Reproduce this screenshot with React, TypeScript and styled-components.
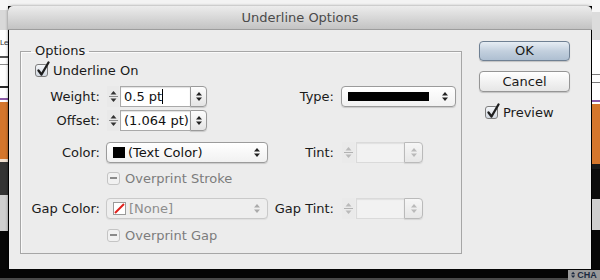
import styled, { createGlobalStyle } from 'styled-components';

const GlobalStyle = createGlobalStyle`
  html, body {
    margin: 0;
    padding: 0;
    background: #000;
  }
  body {
    font-family: "DejaVu Sans", "Liberation Sans", sans-serif;
    -webkit-font-smoothing: antialiased;
  }
`

const Screen = styled.div`
  width: 600px;
  height: 280px;
  overflow: hidden;
  display: grid;
  grid-template-columns: 8px 584px 8px;
  grid-template-rows: 6px 263px 11px;
  background: #000;
`

const Strip = styled.div<{ $col: number }>`
  grid-column: ${p => p.$col};
  grid-row: 1 / 3;
  display: flex;
  flex-direction: column;
  overflow: hidden;
`

const Band = styled.div<{ $h: number; $bg: string }>`
  flex: 0 0 ${p => p.$h}px;
  background: ${p => p.$bg};
  color: #333;
  font-family: "Liberation Sans", sans-serif;
  font-size: 8px;
  letter-spacing: -0.5px;
  line-height: ${p => p.$h}px;
  white-space: nowrap;
  overflow: hidden;
`

const TopGap = styled.div`
  grid-column: 2;
  grid-row: 1;
  background: #f3f3f3;
`

const BottomStrip = styled.div`
  grid-column: 1 / 4;
  grid-row: 3;
  display: flex;
  justify-content: flex-end;
  align-items: flex-start;
  background: #050505;
  border-bottom: 2px solid #4a4a4a;
`

const PanelTag = styled.div`
  width: 32px;
  height: 10px;
  margin-top: 1px;
  background: #9a9a9a;
  color: #1c2a40;
  font-family: "Liberation Sans", sans-serif;
  font-weight: bold;
  font-size: 9px;
  line-height: 10px;
  display: flex;
  align-items: center;
  gap: 2px;
  padding-left: 3px;
  box-sizing: border-box;
`

const Dialog = styled.div`
  grid-column: 2;
  grid-row: 2;
  display: flex;
  flex-direction: column;
  box-shadow: 0 0 3px rgba(0, 0, 0, 0.45);
  border-radius: 5px 5px 0 0;
`

const TitleBar = styled.div`
  height: 24px;
  border-radius: 5px 5px 0 0;
  background: linear-gradient(#ececec, #d8d8d8 50%, #c3c3c3);
  border-bottom: 1px solid #9d9d9d;
  box-sizing: border-box;
  text-align: center;
  font-size: 13px;
  line-height: 24px;
  color: #4a4a4a;
`

const Body = styled.div`
  flex: 1;
  margin: 0 1px;
  background: #ececec;
  display: flex;
  align-items: flex-start;
  padding-left: 11px;
`

const Group = styled.fieldset`
  margin: 13px 0 0 0;
  padding: 0;
  width: 442px;
  height: 211px;
  box-sizing: border-box;
  border: 1px solid #a6a6a6;
  box-shadow: inset 1px 1px 0 #fafafa;
  display: flex;
  flex-direction: column;
`

const Legend = styled.legend`
  margin-left: 10px;
  padding: 0 4px;
  font-size: 13px;
  line-height: 16px;
  color: #1a1a1a;
`

const Row = styled.div<{ $top: number; $h: number }>`
  margin-top: ${p => p.$top}px;
  height: ${p => p.$h}px;
  display: grid;
  grid-template-columns: 85px 162px 73px 1fr;
  align-items: center;
  font-size: 13px;
  color: #1a1a1a;
`

const Label = styled.span<{ $pad?: number }>`
  text-align: right;
  padding-right: ${p => p.$pad ?? 6}px;
  white-space: nowrap;
`

const CheckRow = styled.label<{ $indent: number; $span?: string; $muted?: boolean }>`
  grid-column: ${p => p.$span ?? 'auto'};
  padding-left: ${p => p.$indent}px;
  display: flex;
  align-items: center;
  gap: 5px;
  font-size: 13px;
  color: ${p => (p.$muted ? '#7c7c7c' : '#1a1a1a')};
  white-space: nowrap;
`

const Box = styled.span<{ $disabled?: boolean }>`
  position: relative;
  width: 13px;
  height: 13px;
  box-sizing: border-box;
  border-radius: 3px;
  border: 1px solid ${p => (p.$disabled ? '#c4c4c4' : '#7d7d7d')};
  background: ${p =>
    p.$disabled ? '#f1f1f1' : 'linear-gradient(#f4f6f9, #d3d9e1)'};
  display: flex;
  align-items: center;
  justify-content: center;
  flex-shrink: 0;
`

const Dash = styled.span`
  width: 7px;
  height: 2px;
  background: #8a8a8a;
`

const Tick = styled.svg`
  position: absolute;
  left: 0px;
  top: -4px;
`

const Spin = styled.div<{ $disabled?: boolean }>`
  display: flex;
  height: 21px;
  margin-left: 1px;
  opacity: ${p => (p.$disabled ? 0.6 : 1)};
`

const Stepper = styled.div<{ $w: number }>`
  width: ${p => p.$w}px;
  margin-right: 1px;
  background: #e9e9e9;
  display: flex;
  align-items: center;
  justify-content: center;
`

const Field = styled.div<{ $w: number; $disabled?: boolean }>`
  width: ${p => p.$w}px;
  box-sizing: border-box;
  background: ${p => (p.$disabled ? '#f6f6f6' : '#fff')};
  border: 1px solid ${p => (p.$disabled ? '#cfcfcf' : '#a9a9a9')};
  border-right: none;
  box-shadow: inset 0 1px 1px rgba(0, 0, 0, 0.12);
  padding-left: 3px;
  font-size: 13px;
  line-height: 19px;
  color: #111;
  white-space: nowrap;
  overflow: hidden;
`

const Caret = styled.span`
  display: inline-block;
  width: 1px;
  height: 15px;
  background: #000;
  vertical-align: -3px;
`

const SpinButton = styled.div<{ $w: number }>`
  width: ${p => p.$w}px;
  box-sizing: border-box;
  border: 1px solid #9a9a9a;
  border-radius: 0 4px 4px 0;
  background: linear-gradient(#fdfdfd, #e4e4e4);
  box-shadow: 0 1px 1px rgba(0, 0, 0, 0.15);
  display: flex;
  align-items: center;
  justify-content: center;
`

const Popup = styled.div<{ $w: number; $disabled?: boolean }>`
  width: ${p => p.$w}px;
  height: 21px;
  box-sizing: border-box;
  border: 1px solid ${p => (p.$disabled ? '#c9c9c9' : '#9b9b9b')};
  border-radius: 4px;
  background: ${p =>
    p.$disabled ? '#eeeeee' : 'linear-gradient(#ffffff, #f1f1f1)'};
  box-shadow: 0 1px 1px rgba(0, 0, 0, ${p => (p.$disabled ? 0.06 : 0.15)});
  display: flex;
  align-items: center;
  padding: 0 7px 0 6px;
  gap: 3px;
  font-size: 13px;
  color: ${p => (p.$disabled ? '#8d8d8d' : '#111')};
  white-space: nowrap;
`

const PopupText = styled.span`
  flex: 1;
`

const Swatch = styled.span`
  width: 12px;
  height: 11px;
  background: #000;
  flex-shrink: 0;
`

const LineSample = styled.span`
  flex: 1;
  height: 9px;
  background: #000;
  margin-right: 10px;
`

const Side = styled.div`
  margin-left: 17px;
  padding-top: 11px;
  display: flex;
  flex-direction: column;
`

const Button = styled.div<{ $primary?: boolean }>`
  width: 91px;
  height: ${p => (p.$primary ? 20 : 21)}px;
  margin-bottom: ${p => (p.$primary ? 10 : 13)}px;
  box-sizing: border-box;
  border-radius: 4px;
  border: 1px solid ${p => (p.$primary ? '#6f8093' : '#959595')};
  background: ${p =>
    p.$primary
      ? 'linear-gradient(#e6edf4, #c3d0de 50%, #aebfd1)'
      : 'linear-gradient(#ffffff, #f2f2f2 50%, #e6e6e6)'};
  box-shadow: 0 1px 1px rgba(0, 0, 0, 0.18);
  text-align: center;
  font-size: 13px;
  line-height: ${p => (p.$primary ? 18 : 19)}px;
  color: #1a1a1a;
`

function Arrows({ size = 1, color = '#222' }: { size?: number; color?: string }) {
  return (
    <svg width={6 * size} height={11 * size} viewBox="0 0 6 11">
      <path d="M3 1 L6 4.5 L0 4.5 Z" fill={color} />
      <path d="M3 10 L6 6.5 L0 6.5 Z" fill={color} />
    </svg>
  )
}

function StepperArrows({ color = '#333' }: { color?: string }) {
  return (
    <svg width="9" height="15" viewBox="0 0 9 15">
      <path d="M4.5 2 L7.5 5.5 L1.5 5.5 Z" fill={color} />
      <rect x="0" y="7" width="9" height="1" fill="#8d8d8d" />
      <path d="M4.5 13 L7.5 9.5 L1.5 9.5 Z" fill={color} />
    </svg>
  )
}

function Check({ disabled }: { disabled?: boolean }) {
  return (
    <Box $disabled={disabled}>
      {disabled ? (
        <Dash />
      ) : (
        <Tick width="15" height="17" viewBox="0 0 15 17">
          <path
            d="M2.5 9.5 L5.5 13.5 L12.5 1.5"
            fill="none"
            stroke="#1e1e1e"
            strokeWidth="2.3"
            strokeLinecap="round"
            strokeLinejoin="round"
          />
        </Tick>
      )}
    </Box>
  )
}

function NoneSwatch() {
  return (
    <svg width="13" height="13" viewBox="0 0 13 13">
      <rect x="0.5" y="0.5" width="12" height="12" fill="#fff" stroke="#9a9a9a" />
      <path d="M2 11 L11 2" stroke="#e0201c" strokeWidth="2" />
    </svg>
  )
}

function SpinBox({
  value,
  caret,
  disabled,
}: {
  value?: string
  caret?: boolean
  disabled?: boolean
}) {
  return (
    <Spin $disabled={disabled}>
      <Stepper $w={disabled ? 13 : 12}>
        <StepperArrows color={disabled ? '#999' : '#333'} />
      </Stepper>
      <Field $w={disabled ? 48 : 70} $disabled={disabled}>
        {value}
        {caret && <Caret />}
      </Field>
      <SpinButton $w={disabled ? 19 : 17}>
        <Arrows color={disabled ? '#999' : '#222'} />
      </SpinButton>
    </Spin>
  )
}

const leftBands: [number, string, string?][] = [
  [10, '#f6f6f6'],
  [20, '#d9d9d9'],
  [26, '#ffffff', 'Le'],
  [2, '#555555'],
  [6, '#ffffff'],
  [1, '#8a8a8a'],
  [21, '#ffffff'],
  [2, '#2a2a2a'],
  [10, '#ffffff'],
  [2, '#8b5aa8'],
  [2, '#ffffff'],
  [57, '#d4762c'],
  [3, '#f0e0d0'],
  [33, '#333333'],
  [36, '#cfcfcf'],
  [38, '#070707'],
]

const rightBands: [number, string, string?][] = [
  [12, '#f6f6f6'],
  [28, '#dcdcdc'],
  [34, '#ffffff'],
  [1, '#7a7a7a'],
  [7, '#ffffff'],
  [1, '#7a7a7a'],
  [17, '#ffffff'],
  [2, '#8b5aa8'],
  [2, '#ffffff'],
  [60, '#d4762c'],
  [5, '#1a1a1a'],
  [30, '#0c0c0c'],
  [31, '#cfcfcf'],
  [39, '#070707'],
]

export default function App() {
  return (
    <>
      <GlobalStyle />
      <Screen>
        <Strip $col={1}>
          {leftBands.map(([h, bg, text], i) => (
            <Band key={i} $h={h} $bg={bg}>
              {text}
            </Band>
          ))}
        </Strip>
        <TopGap />
        <Dialog>
          <TitleBar>Underline Options</TitleBar>
          <Body>
            <Group>
              <Legend>Options</Legend>

              <Row $top={1} $h={20}>
                <CheckRow $indent={14} $span="1 / 5">
                  <Check />
                  Underline On
                </CheckRow>
              </Row>

              <Row $top={6} $h={21}>
                <Label>Weight:</Label>
                <SpinBox value="0.5 pt" caret />
                <Label $pad={7}>Type:</Label>
                <Popup $w={115}>
                  <LineSample />
                  <Arrows />
                </Popup>
              </Row>

              <Row $top={3} $h={21}>
                <Label>Offset:</Label>
                <SpinBox value="(1.064 pt)" />
              </Row>

              <Row $top={11} $h={21}>
                <Label>Color:</Label>
                <Popup $w={162}>
                  <Swatch />
                  <PopupText>(Text Color)</PopupText>
                  <Arrows />
                </Popup>
                <Label $pad={7}>Tint:</Label>
                <SpinBox disabled />
              </Row>

              <Row $top={5} $h={20}>
                <CheckRow $indent={1} $span="2 / 4" $muted>
                  <Check disabled />
                  Overprint Stroke
                </CheckRow>
              </Row>

              <Row $top={10} $h={21}>
                <Label>Gap Color:</Label>
                <Popup $w={162} $disabled>
                  <NoneSwatch />
                  <PopupText>[None]</PopupText>
                  <Arrows color="#aaa" />
                </Popup>
                <Label $pad={7}>Gap Tint:</Label>
                <SpinBox disabled />
              </Row>

              <Row $top={6} $h={20}>
                <CheckRow $indent={1} $span="2 / 4" $muted>
                  <Check disabled />
                  Overprint Gap
                </CheckRow>
              </Row>
            </Group>

            <Side>
              <Button $primary>OK</Button>
              <Button>Cancel</Button>
              <CheckRow $indent={6}>
                <Check />
                Preview
              </CheckRow>
            </Side>
          </Body>
        </Dialog>
        <Strip $col={3}>
          {rightBands.map(([h, bg, text], i) => (
            <Band key={i} $h={h} $bg={bg}>
              {text}
            </Band>
          ))}
        </Strip>
        <BottomStrip>
          <PanelTag>
            <Arrows size={0.7} color="#1c2a40" />
            CHA
          </PanelTag>
        </BottomStrip>
      </Screen>
    </>
  )
}
